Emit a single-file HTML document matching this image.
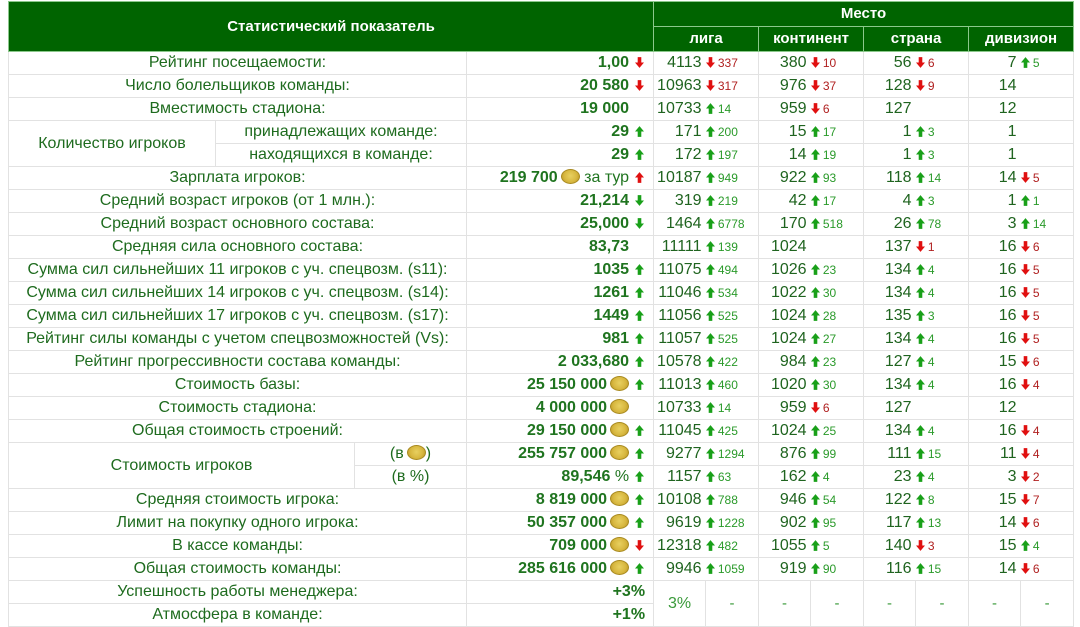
<!DOCTYPE html>
<html><head><meta charset="utf-8">
<style>
html,body{margin:0;padding:0;background:#fff;width:1080px;height:623px;overflow:hidden}
table{position:absolute;left:8px;top:1px;border-collapse:collapse;table-layout:fixed;font-family:"Liberation Sans",sans-serif;width:1065px}
tr{height:23px}
td,th{border:1px solid #e2e2e2;padding:0;white-space:nowrap;overflow:hidden;line-height:18px}
th{background:#006400;color:#fff;font-weight:bold;font-size:15px;border:1px solid #8bc88b}
tr.h{height:25px}
svg{vertical-align:-1px}
.l{text-align:center;color:#1e6b1e;font-size:16px}
.v{text-align:right;color:#1f741f;font-weight:bold;font-size:16px;padding-right:4px}
.a{display:inline-block;width:20px;text-align:center;line-height:12px}
.n{text-align:right;color:#1f641f;font-size:16px;padding-right:4px;border-right:none}
.d{text-align:left;font-size:12px;border-left:none}
.g{color:#2a9a2a}.r{color:#b02020}
.coin{display:inline-block;width:19px;height:15px;border-radius:50%;background:radial-gradient(circle at 50% 45%,#e8d060 0,#d8b840 55%,#b89020 100%);border:1px solid #a88a20;vertical-align:-2px;margin-left:3px;box-sizing:border-box}
.dash{text-align:center;color:#3a9a3a;font-size:15px}
</style></head><body>
<svg width="0" height="0" style="position:absolute">
<defs>
<symbol id="up" viewBox="0 0 10 12"><polygon points="5,0 10,6 7,6 7,12 3,12 3,6 0,6"/></symbol>
<symbol id="dn" viewBox="0 0 10 12"><polygon points="5,12 10,6 7,6 7,0 3,0 3,6 0,6"/></symbol>
</defs></svg>
<table>
<colgroup><col style="width:207px"><col style="width:139px"><col style="width:112px"><col style="width:187px">
<col style="width:52px"><col style="width:53px"><col style="width:52px"><col style="width:53px"><col style="width:52px"><col style="width:53px"><col style="width:52px"><col style="width:53px"></colgroup>
<tr class="h"><th colspan="4" rowspan="2">Статистический показатель</th><th colspan="8">Место</th></tr>
<tr class="h"><th colspan="2">лига</th><th colspan="2">континент</th><th colspan="2">страна</th><th colspan="2">дивизион</th></tr>
<tbody id="b"></tbody>
</table>
<script>
const U='<svg width="9" height="11" fill="#19a019"><use href="#up"/></svg>';
const UR='<svg width="9" height="11" fill="#e01010"><use href="#up"/></svg>';
const D='<svg width="9" height="11" fill="#e01010"><use href="#dn"/></svg>';
const DG='<svg width="9" height="11" fill="#19a019"><use href="#dn"/></svg>';
const C='<span class="coin"></span>';
function ar(x){return '<span class="a">'+(x=='u'?U:x=='d'?D:x=='U'?UR:x=='D'?DG:'')+'</span>';}
function pl(s){
 let [n,d]=s.split(' ');let h='<td class="n">'+n+'</td><td class="d">';
 if(d){let up=d[0]=='u';h+='<span class="'+(up?'g':'r')+'">'+(up?U:D)+' '+d.slice(1)+'</span>';}
 return h+'</td>';}
const R=[
['Рейтинг посещаемости:','1,00','d','4113 d337|380 d10|56 d6|7 u5'],
['Число болельщиков команды:','20 580','d','10963 d317|976 d37|128 d9|14'],
['Вместимость стадиона:','19 000','','10733 u14|959 d6|127|12'],
['#K1','29','u','171 u200|15 u17|1 u3|1'],
['#K2','29','u','172 u197|14 u19|1 u3|1'],
['Зарплата игроков:','219 700'+C+' <span style="font-weight:normal">за тур</span>','U','10187 u949|922 u93|118 u14|14 d5'],
['Средний возраст игроков (от 1 млн.):','21,214','D','319 u219|42 u17|4 u3|1 u1'],
['Средний возраст основного состава:','25,000','D','1464 u6778|170 u518|26 u78|3 u14'],
['Средняя сила основного состава:','83,73','','11111 u139|1024|137 d1|16 d6'],
['Сумма сил сильнейших 11 игроков с уч. спецвозм. (s11):','1035','u','11075 u494|1026 u23|134 u4|16 d5'],
['Сумма сил сильнейших 14 игроков с уч. спецвозм. (s14):','1261','u','11046 u534|1022 u30|134 u4|16 d5'],
['Сумма сил сильнейших 17 игроков с уч. спецвозм. (s17):','1449','u','11056 u525|1024 u28|135 u3|16 d5'],
['Рейтинг силы команды с учетом спецвозможностей (Vs):','981','u','11057 u525|1024 u27|134 u4|16 d5'],
['Рейтинг прогрессивности состава команды:','2 033,680','u','10578 u422|984 u23|127 u4|15 d6'],
['Стоимость базы:','25 150 000'+C,'u','11013 u460|1020 u30|134 u4|16 d4'],
['Стоимость стадиона:','4 000 000'+C,'','10733 u14|959 d6|127|12'],
['Общая стоимость строений:','29 150 000'+C,'u','11045 u425|1024 u25|134 u4|16 d4'],
['#S1','255 757 000'+C,'u','9277 u1294|876 u99|111 u15|11 d4'],
['#S2','89,546 <span style="font-weight:normal">%</span>','u','1157 u63|162 u4|23 u4|3 d2'],
['Средняя стоимость игрока:','8 819 000'+C,'u','10108 u788|946 u54|122 u8|15 d7'],
['Лимит на покупку одного игрока:','50 357 000'+C,'u','9619 u1228|902 u95|117 u13|14 d6'],
['В кассе команды:','709 000'+C,'d','12318 u482|1055 u5|140 d3|15 u4'],
['Общая стоимость команды:','285 616 000'+C,'u','9946 u1059|919 u90|116 u15|14 d6']];
let h='';
for(const r of R){
 h+='<tr>';
 if(r[0]=='#K1')h+='<td class="l" rowspan="2">Количество игроков</td><td class="l" colspan="2">принадлежащих команде:</td>';
 else if(r[0]=='#K2')h+='<td class="l" colspan="2">находящихся в команде:</td>';
 else if(r[0]=='#S1')h+='<td class="l" colspan="2" rowspan="2">Стоимость игроков</td><td class="l">(в<span class="coin"></span>)</td>';
 else if(r[0]=='#S2')h+='<td class="l">(в %)</td>';
 else h+='<td class="l" colspan="3">'+r[0]+'</td>';
 h+='<td class="v">'+r[1]+ar(r[2])+'</td>';
 for(const p of r[3].split('|'))h+=pl(p);
 h+='</tr>';
}
h+='<tr><td class="l" colspan="3">Успешность работы менеджера:</td><td class="v" style="padding-right:8px">+3%</td><td class="dash" rowspan="2" style="font-size:16px">3%</td>';
for(let i=0;i<7;i++)h+='<td class="dash" rowspan="2">-</td>';
h+='</tr><tr><td class="l" colspan="3">Атмосфера в команде:</td><td class="v" style="padding-right:8px">+1%</td></tr>';
document.getElementById('b').innerHTML=h;
</script>
</body></html>
